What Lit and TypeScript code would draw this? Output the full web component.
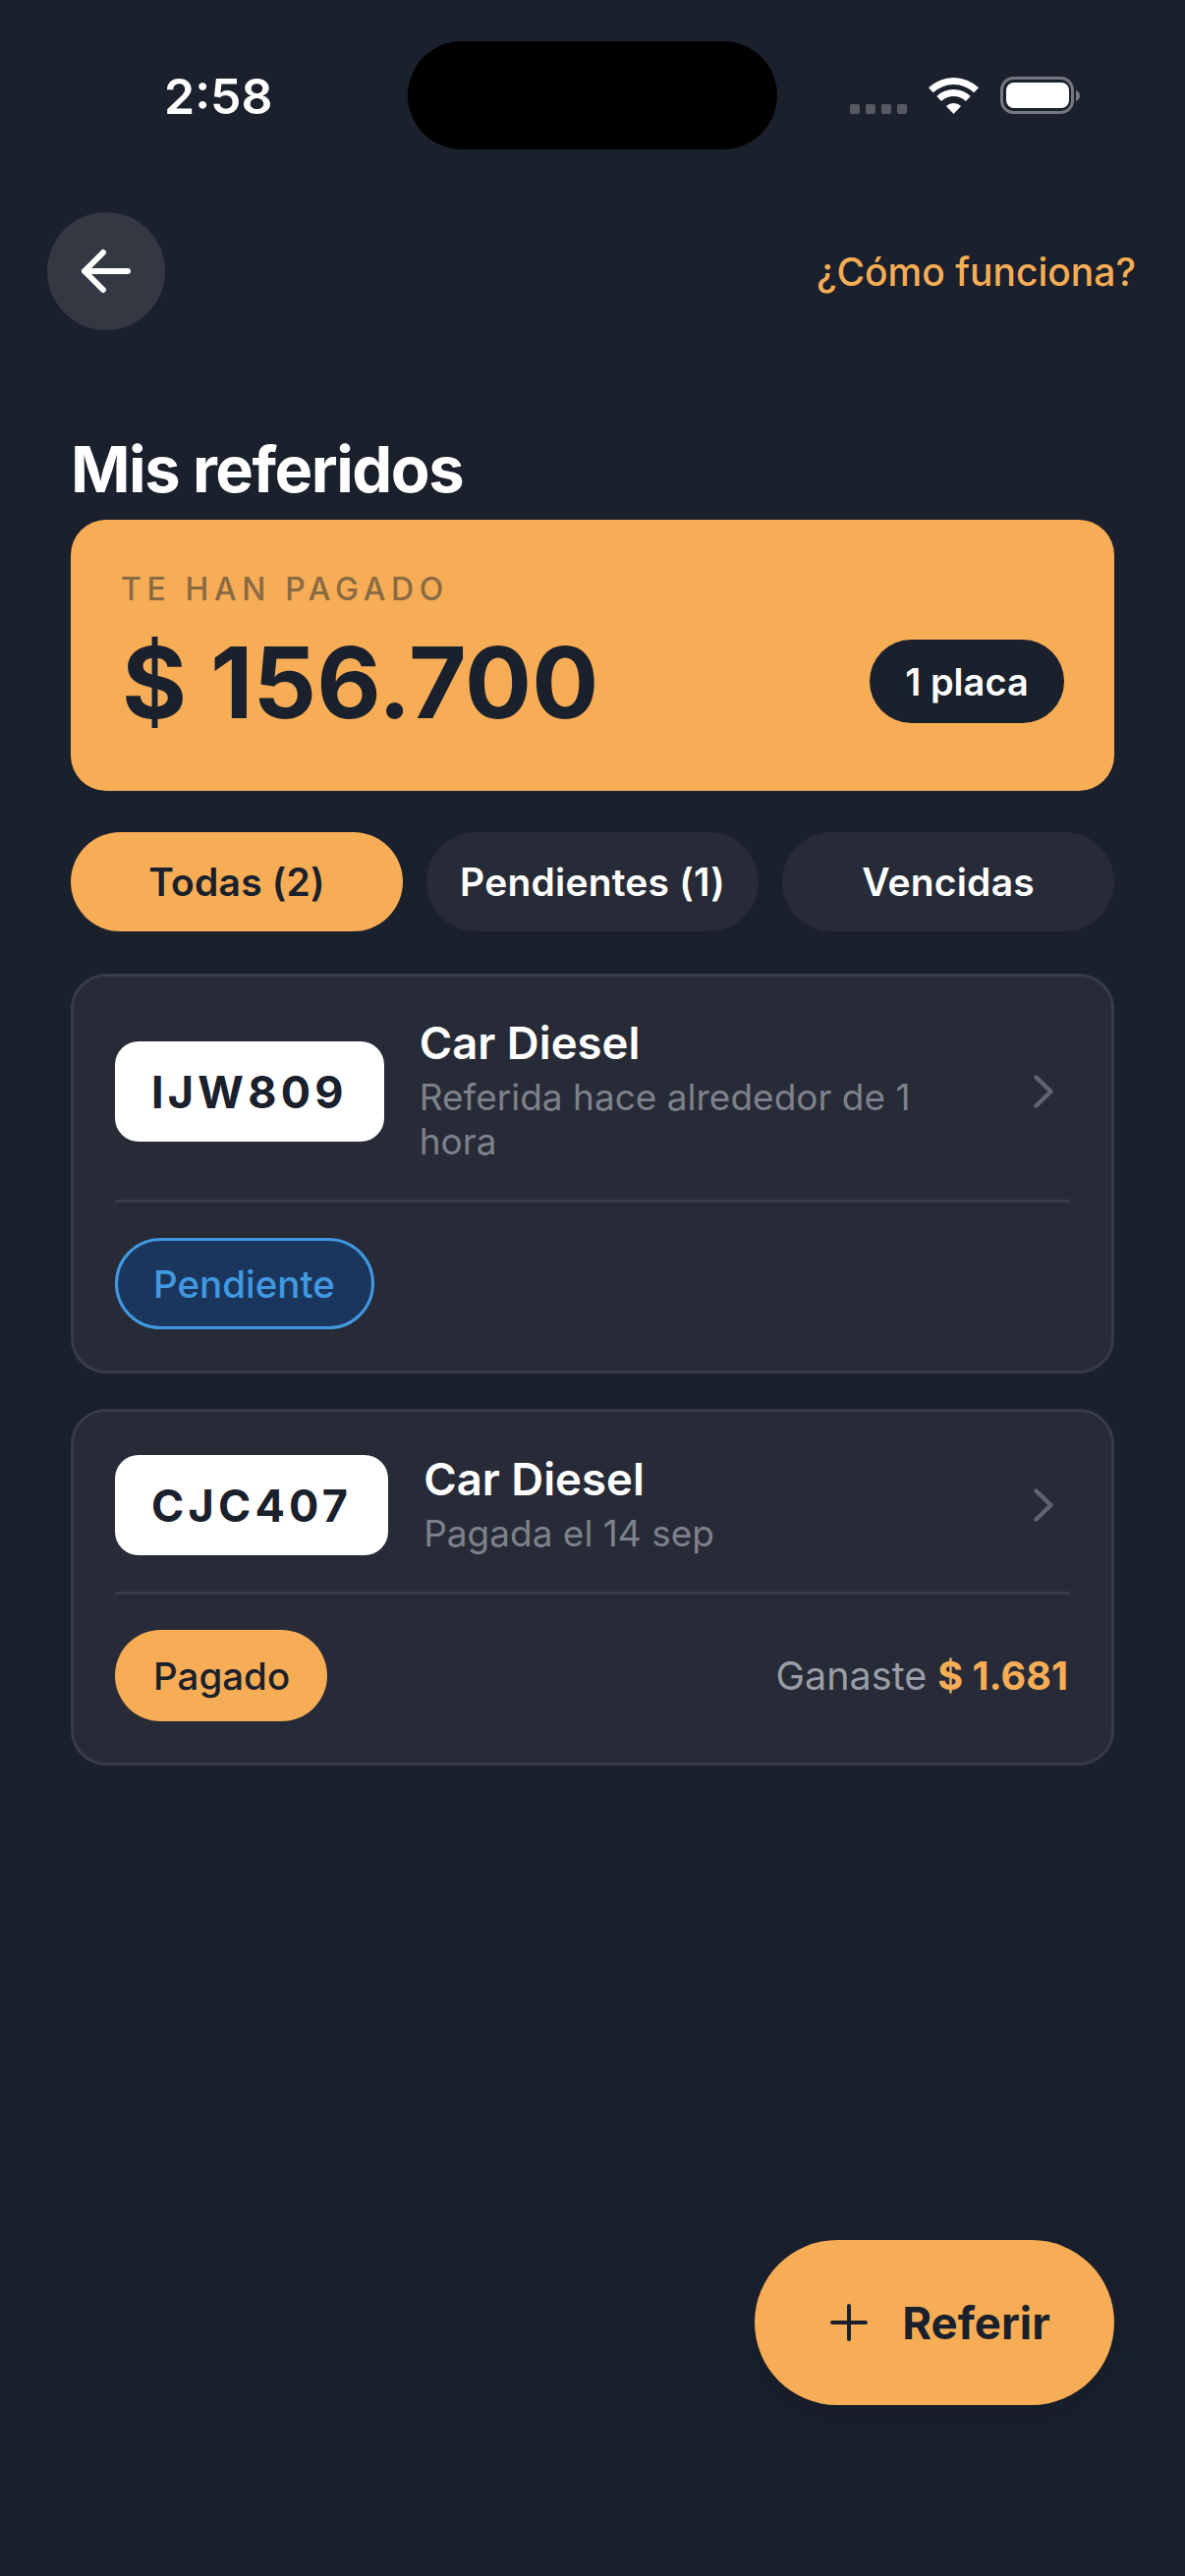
/**
 * AppRoot - "Mis referidos" screen
 * Referral summary, status filters and the list of referred plates
 */

import { LitElement, html, css, svg } from "lit";
import { customElement, state } from "lit/decorators.js";
import { classMap } from "lit/directives/class-map.js";

interface Referral {
  plate: string;
  title: string;
  subtitle: string;
  status: "pending" | "paid";
  statusLabel: string;
  earned?: string;
}

const chevron = svg`<path d="M3.500 3.500L18.500 18L3.500 32.500" fill="none" stroke="currentColor" stroke-width="4.500" stroke-linecap="round" stroke-linejoin="round"/>`;

@customElement("app-root")
export class AppRoot extends LitElement {
  static override styles = css`
    :host {
      display: block;
      position: relative;
      height: 2622px;
      background: #1a202c;
      font-family: Inter, "Liberation Sans", sans-serif;
      color: #fff;
      overflow: hidden;
    }

    .status-bar {
      display: flex;
      align-items: flex-start;
      height: 216px;
    }

    .time {
      width: 415px;
      box-sizing: border-box;
      padding: 68px 0 0 167px;
      font-size: 50px;
      line-height: 60px;
      font-weight: 600;
    }

    .island {
      width: 376px;
      height: 110px;
      margin-top: 42px;
      border-radius: 55px;
      background: #000;
    }

    .indicators {
      display: flex;
      align-items: flex-end;
      height: 38px;
      margin: 78px 0 0 74px;
    }

    .signal {
      display: flex;
      gap: 6px;
      margin-right: 22px;
    }

    .signal span {
      width: 10px;
      height: 10px;
      border-radius: 2px;
      background: #565961;
    }

    .wifi {
      width: 51px;
      height: 37px;
      margin-right: 22px;
    }

    .battery {
      width: 82px;
      height: 38px;
    }

    .header {
      display: flex;
      align-items: center;
      justify-content: space-between;
      padding: 0 50px 0 48px;
    }

    .back {
      display: flex;
      align-items: center;
      justify-content: center;
      width: 120px;
      height: 120px;
      border-radius: 50%;
      background: #333843;
    }

    .back svg {
      width: 56px;
      height: 52px;
    }

    .help {
      font-size: 39px;
      font-weight: 500;
      color: #f6ad55;
    }

    .content {
      padding: 0 72px;
    }

    h1 {
      margin: 0;
      padding-top: 102px;
      height: 91px;
      font-size: 65px;
      line-height: 79px;
      font-weight: 700;
      letter-spacing: -1.5px;
    }

    .hero {
      display: flex;
      align-items: flex-end;
      justify-content: space-between;
      box-sizing: border-box;
      height: 276px;
      padding: 0 51px 56px 51px;
      border-radius: 36px;
      background: #f6ad55;
      color: #1a202c;
    }

    .hero-label {
      font-size: 32px;
      line-height: 36px;
      font-weight: 500;
      letter-spacing: 5.6px;
      color: #8a6a43;
      margin-bottom: 21px;
    }

    .hero-amount {
      margin-left: 1px;
      font-size: 101px;
      line-height: 110px;
      font-weight: 700;
    }

    .hero-pill {
      display: flex;
      align-items: center;
      justify-content: center;
      width: 198px;
      height: 85px;
      margin-bottom: 13px;
      border-radius: 43px;
      background: #1a202c;
      color: #fff;
      font-size: 38px;
      font-weight: 600;
    }

    .tabs {
      display: grid;
      grid-template-columns: repeat(3, 1fr);
      gap: 24px;
      margin-top: 42px;
    }

    .tab {
      display: flex;
      align-items: center;
      justify-content: center;
      height: 101px;
      border-radius: 51px;
      background: #272b37;
      font-size: 39px;
      letter-spacing: 0.2px;
      font-weight: 600;
    }

    .tab.active {
      background: #f6ad55;
      color: #1a202c;
    }

    .list {
      display: flex;
      flex-direction: column;
      gap: 36px;
      margin-top: 43px;
    }

    .card {
      box-sizing: border-box;
      padding: 44px 42px 42px;
      border: 3px solid #373c49;
      border-radius: 36px;
      background: #272b37;
    }

    .row {
      display: flex;
      align-items: center;
      gap: 36px;
      padding-bottom: 37px;
      border-bottom: 3px solid #373c49;
    }

    .plate {
      flex: none;
      display: flex;
      align-items: center;
      justify-content: center;
      height: 102px;
      padding: 0 37px;
      border-radius: 24px;
      background: #fff;
      color: #1a202c;
      font-size: 45px;
      font-weight: 700;
      letter-spacing: 4.2px;
    }

    .info {
      flex: 1;
      min-width: 0;
      padding-right: 40px;
    }

    .title {
      font-size: 45.500px;
      line-height: 48px;
      margin-bottom: 8px;
      font-weight: 600;
    }

    .subtitle {
      font-size: 37px;
      line-height: 45px;
      color: #7e818a;
    }

    .chevron {
      flex: none;
      width: 22px;
      height: 36px;
      margin-right: 16px;
      color: #5f636d;
    }

    .footer {
      display: flex;
      align-items: center;
      justify-content: space-between;
      margin-top: 36px;
    }

    .badge {
      display: flex;
      align-items: center;
      box-sizing: border-box;
      height: 93px;
      padding: 0 38px 0 39px;
      border-radius: 47px;
      font-size: 38.500px;
      font-weight: 500;
    }

    .badge.pending {
      border: 3px solid #4299e1;
      background: #1a365d;
      color: #4299e1;
      padding: 0 37px 0 36px;
    }

    .badge.paid {
      background: #f6ad55;
      color: #1a202c;
    }

    .earned {
      padding-right: 2px;
      font-size: 39.500px;
      color: #9a9da5;
    }

    .earned strong {
      font-weight: 700;
      color: #f6ad55;
    }

    .fab {
      position: absolute;
      right: 72px;
      top: 2280px;
      display: flex;
      align-items: center;
      justify-content: center;
      gap: 35px;
      box-sizing: border-box;
      width: 366px;
      height: 168px;
      padding-left: 12px;
      border-radius: 84px;
      background: #f6ad55;
      color: #1a202c;
      font-size: 45.500px;
      font-weight: 700;
      box-shadow: 0 12px 32px rgba(0, 0, 0, 0.12);
    }

    .fab svg {
      width: 38px;
      height: 38px;
    }
  `;

  @state()
  private activeTab = 0;

  private tabs = ["Todas (2)", "Pendientes (1)", "Vencidas"];

  private referrals: Referral[] = [
    {
      plate: "IJW809",
      title: "Car Diesel",
      subtitle: "Referida hace alrededor de 1 hora",
      status: "pending",
      statusLabel: "Pendiente",
    },
    {
      plate: "CJC407",
      title: "Car Diesel",
      subtitle: "Pagada el 14 sep",
      status: "paid",
      statusLabel: "Pagado",
      earned: "$ 1.681",
    },
  ];

  private renderStatusBar() {
    return html`
      <div class="status-bar">
        <div class="time">2:58</div>
        <div class="island"></div>
        <div class="indicators">
          <div class="signal">
            <span></span><span></span><span></span><span></span>
          </div>
          <svg class="wifi" viewBox="0 0 51 37" fill="#fff">
            <path d="M0 10.2A37 37 0 0 1 51 10.2L46.2 15.3A30 30 0 0 0 4.8 15.3Z" />
            <path d="M8.25 18.9A25 25 0 0 1 42.75 18.9L37.9 24A18 18 0 0 0 13.1 24Z" />
            <path d="M17.9 29A11 11 0 0 1 33.1 29L25.5 37Z" />
          </svg>
          <svg class="battery" viewBox="0 0 82 38">
            <rect x="1.5" y="1.5" width="72" height="35" rx="12" fill="none" stroke="#74777f" stroke-width="3" />
            <rect x="6" y="6" width="64" height="26" rx="8" fill="#fff" />
            <path d="M77 14a6 6 0 0 1 4 5.500a6 6 0 0 1-4 5.500z" fill="#74777f" />
          </svg>
        </div>
      </div>
    `;
  }

  private renderCard(item: Referral) {
    return html`
      <div class="card">
        <div class="row">
          <div class="plate">${item.plate}</div>
          <div class="info">
            <div class="title">${item.title}</div>
            <div class="subtitle">${item.subtitle}</div>
          </div>
          <svg class="chevron" viewBox="0 0 22 36">${chevron}</svg>
        </div>
        <div class="footer">
          <div class="badge ${item.status}">${item.statusLabel}</div>
          ${item.earned
            ? html`<div class="earned">Ganaste <strong>${item.earned}</strong></div>`
            : null}
        </div>
      </div>
    `;
  }

  override render() {
    return html`
      ${this.renderStatusBar()}
      <div class="header">
        <div class="back">
          <svg viewBox="0 0 56 52" fill="none" stroke="#fff" stroke-width="6" stroke-linecap="round" stroke-linejoin="round">
            <path d="M50 26H6M25 7L6 26l19 19" />
          </svg>
        </div>
        <div class="help">¿Cómo funciona?</div>
      </div>
      <div class="content">
        <h1>Mis referidos</h1>
        <div class="hero">
          <div>
            <div class="hero-label">TE HAN PAGADO</div>
            <div class="hero-amount">$ 156.700</div>
          </div>
          <div class="hero-pill">1 placa</div>
        </div>
        <div class="tabs">
          ${this.tabs.map(
            (tab, i) => html`
              <div class=${classMap({ tab: true, active: i === this.activeTab })}>${tab}</div>
            `
          )}
        </div>
        <div class="list">${this.referrals.map((r) => this.renderCard(r))}</div>
      </div>
      <div class="fab">
        <svg viewBox="0 0 38 38" fill="none" stroke="currentColor" stroke-width="4" stroke-linecap="round">
          <path d="M19 2v34M2 19h34" />
        </svg>
        <span>Referir</span>
      </div>
    `;
  }
}

declare global {
  interface HTMLElementTagNameMap {
    "app-root": AppRoot;
  }
}
